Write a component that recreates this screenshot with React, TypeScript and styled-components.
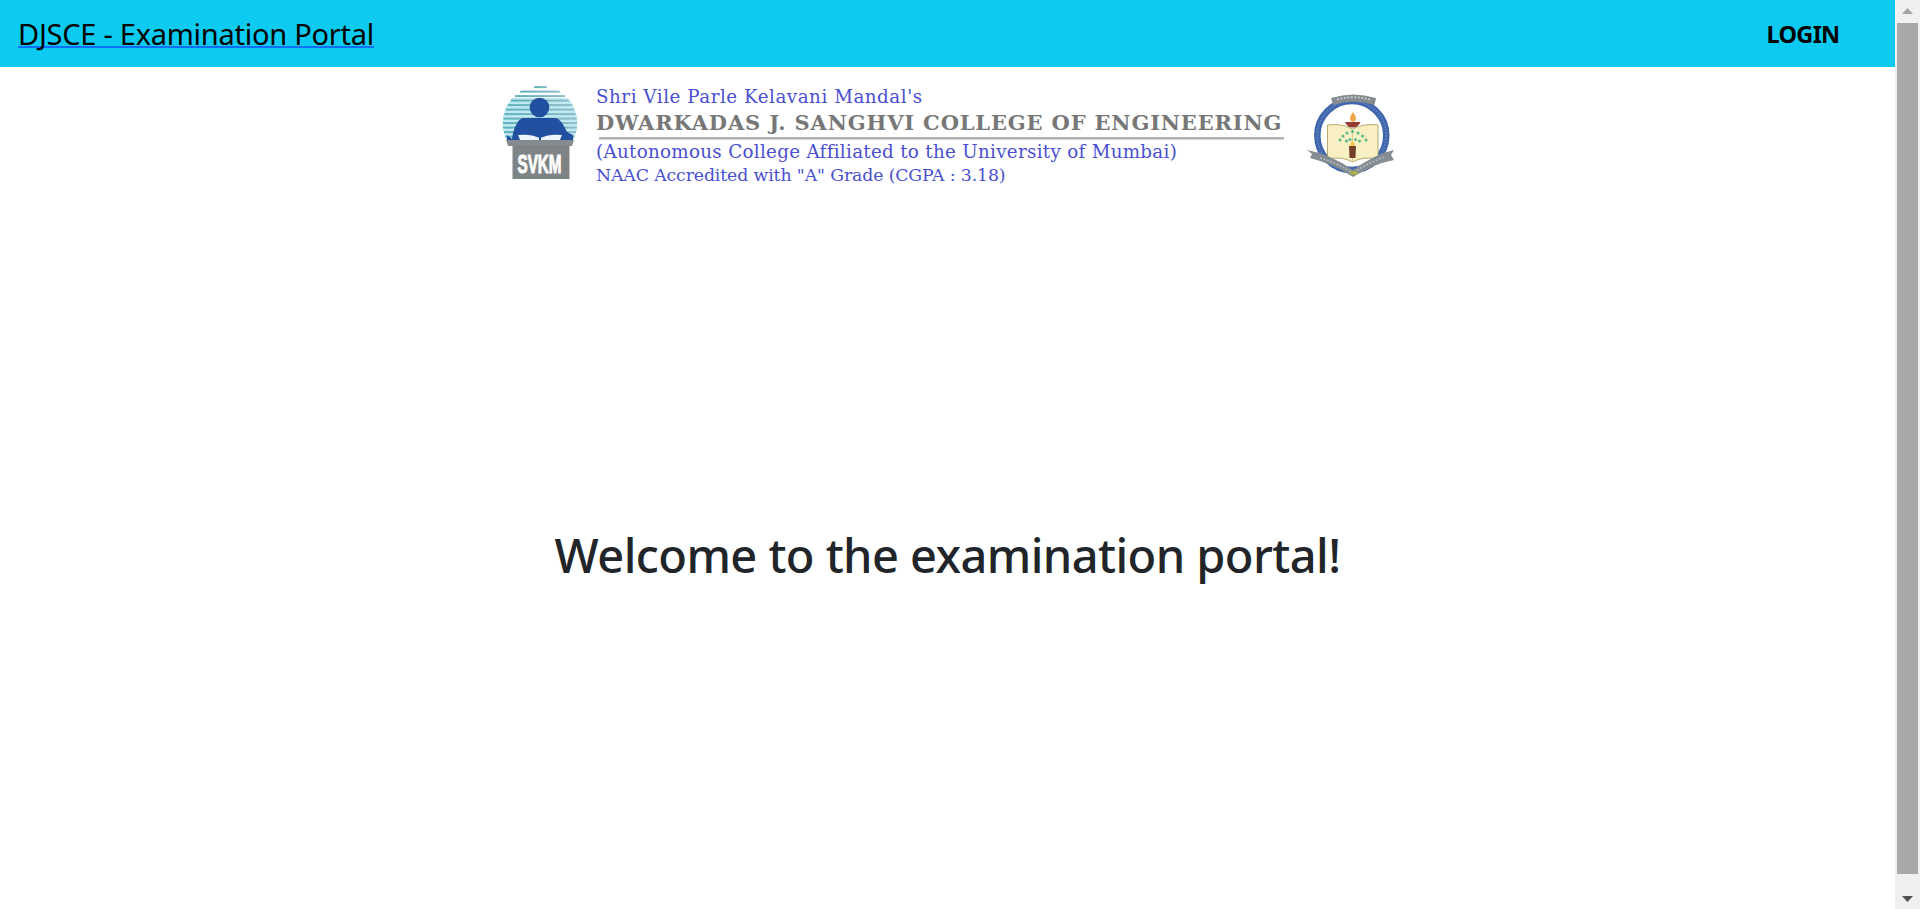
import React from "react";
import styled, { createGlobalStyle } from "styled-components";

const GlobalStyle = createGlobalStyle`
  * { box-sizing: border-box; }
  html, body { margin: 0; height: 100%; overflow: hidden; background: #fff; }
  body { font-family: "Noto Sans", "Open Sans", sans-serif; color: #212529; }
`;

const Shell = styled.div`
  display: flex;
  height: 100vh;
`;

const Page = styled.div`
  flex: 1;
  min-width: 0;
  display: flex;
  flex-direction: column;
`;

const Navbar = styled.header`
  height: 67px;
  flex: none;
  display: flex;
  align-items: center;
  justify-content: space-between;
  padding: 0 55.5px 0 18px;
  background: #0dcaf0;
`;

const Brand = styled.a`
  font-size: 29px;
  line-height: 40px;
  font-weight: 400;
  letter-spacing: -0.26px;
  white-space: nowrap;
  color: #000;
  text-decoration: underline;
  text-decoration-color: #0d6efd;
  text-decoration-thickness: 2px;
  text-underline-offset: 1px;
  text-decoration-skip-ink: none;
`;

const LoginLink = styled.a`
  font-size: 23.5px;
  line-height: 32px;
  font-weight: 700;
  letter-spacing: -0.7px;
  color: #000;
  text-decoration: none;
`;

const Banner = styled.section`
  width: 901px;
  height: 123px;
  margin: 0 auto;
  padding-top: 13px;
  flex: none;
  display: flex;
`;

const Crest = styled.svg`
  flex: none;
  display: block;
  overflow: visible;
`;

const BannerText = styled.div`
  width: 703px;
  padding: 5px 0 0 9px;
  flex: none;
  font-family: "DejaVu Serif", serif;
  color: #4a4fd0;
`;

const BannerLine = styled.div<{ $size: number; $spacing: number; $height: number }>`
  font-size: ${(p) => p.$size}px;
  letter-spacing: ${(p) => p.$spacing}px;
  height: ${(p) => p.$height}px;
  line-height: ${(p) => p.$height}px;
  white-space: nowrap;
`;

const CollegeName = styled(BannerLine)`
  font-weight: 700;
  color: #777;
`;

const Rule = styled.div`
  width: 685px;
  height: 3px;
  margin-left: 3px;
  background: #b0b0b0;
  border-bottom: 1px solid #d4d4d4;
`;

const Welcome = styled.main`
  flex: 1;
  padding-top: 333px;
  text-align: center;
`;

const Heading = styled.h1`
  margin: 0;
  font-size: 47px;
  line-height: 64px;
  font-weight: 500;
  letter-spacing: -0.57px;
`;

const Scrollbar = styled.aside`
  width: 25px;
  flex: none;
  display: flex;
  flex-direction: column;
  align-items: center;
  background: #f0f0f0;
`;

const ScrollButton = styled.div<{ $height: number; $top: number }>`
  height: ${(p) => p.$height}px;
  padding-top: ${(p) => p.$top}px;
  flex: none;
`;

const Thumb = styled.div`
  width: 21px;
  flex: 1;
  background: #a8a8a8;
`;

const stripes = [
  [87, 534, 547], [91.5, 520, 560], [96, 515, 565], [100.5, 511, 569],
  [105, 508, 572], [109.5, 506, 574], [114, 504.5, 575.5], [118.5, 503.5, 576.5],
  [123, 503, 577], [127.5, 503, 577], [132, 504, 576], [136.5, 505, 575],
];

function MandalCrest() {
  return (
    <Crest width="90" height="110" viewBox="497 80 90 110">
      <defs>
        <clipPath id="globe"><circle cx="540" cy="123" r="37.5" /></clipPath>
        <linearGradient id="sky" x1="0" x2="1">
          <stop offset="0" stopColor="#5fb0bd" />
          <stop offset="1" stopColor="#8dbcc7" />
        </linearGradient>
      </defs>
      <g clipPath="url(#globe)">
        <rect x="502" y="98" width="76" height="43" fill="#c0eaf2" />
        {stripes.map(([y, a, b]) => (
          <rect key={y} x={a} y={y - 0.9} width={b - a} height="2" fill="url(#sky)" />
        ))}
      </g>
      <circle cx="539.5" cy="107.5" r="9.8" fill="#20509f" />
      <path d="M512 139 L513 133 Q517 119 523 118 L556 118 Q561 119 567 132 L573 135 L573 140 L507 140 L507 135 Z" fill="#20509f" />
      <path d="M518 135 Q530 133.5 540 138 Q550 133.5 562 135 L560 140 L520 140 Z" fill="#edf4fb" />
      <path d="M540 136 V140" stroke="#20509f" strokeWidth="2" />
      <path d="M506 140 H574 L572 146 H508 Z" fill="#858b8f" />
      <rect x="512.5" y="145.5" width="57" height="33.500" fill="#7f8587" />
      <text x="517.5" y="172.5" textLength="44" lengthAdjust="spacingAndGlyphs" fontFamily="Liberation Sans" fontWeight="700" fontSize="26" fill="#fff" stroke="#fff" strokeWidth="1">SVKM</text>
    </Crest>
  );
}

const leaves = [
  [1340, 140], [1343, 136], [1347, 133], [1352.5, 131.5], [1358, 133], [1362.5, 136], [1366, 140],
  [1346.5, 141], [1350, 139.5], [1355.5, 139.5], [1359.5, 141],
];

function CollegeCrest() {
  return (
    <Crest width="108" height="110" viewBox="1290 80 108 110">
      <circle cx="1351.8" cy="135.5" r="34.5" fill="#fff" stroke="#3f66ac" strokeWidth="6.5" />
      <circle cx="1351.8" cy="135.5" r="34.5" fill="none" stroke="#6484bd" strokeWidth="1.8" strokeDasharray="1.5 1.5" />
      <path d="M1331 98 Q1353 91 1376 98 L1374.500 105 Q1353 98 1333 105 Z" fill="#858b8f" />
      <path d="M1337 99.500 Q1353 95 1370 99.500" fill="none" stroke="#c2c5c8" strokeWidth="2" strokeDasharray="2 1.5" />
      <path d="M1327.500 125 Q1341 123 1352.500 129 Q1364 123 1378 125 V159 Q1363 156 1352.500 162 Q1342 156 1327.500 159 Z" fill="#f8f0c2" stroke="#b7aa72" strokeWidth="1" />
      <path d="M1352.500 129 V161" stroke="#d8cc93" />
      <path d="M1345 122 H1360.500 Q1358 127.500 1352.800 127.500 Q1347 127.500 1345 122 Z" fill="#953c31" />
      <path d="M1353 112 Q1359 120 1353 122 Q1347 120 1353 112" fill="#f0a74c" />
      {leaves.map(([x, y]) => <circle key={`${x}-${y}`} cx={x} cy={y} r="1.5" fill="#5ab88b" />)}
      <path d="M1352.500 141 Q1357 145 1352.500 147 Q1348 145 1352.500 141" fill="#eec343" />
      <path d="M1349 146 H1356 L1355.500 158 H1349.500 Z" fill="#76402c" />
      <path d="M1307 150 Q1330 154 1353 170 Q1375 154 1394 150 L1391 155 L1394 160 Q1373 164 1353 177 Q1334 164 1310 158 L1312 154 Z" fill="#858c92" />
      <path d="M1320 158 Q1338 163 1353 173.500 Q1367 163 1385 157" fill="none" stroke="#b5babf" strokeWidth="1.5" strokeDasharray="2 1.5" />
      <ellipse cx="1354" cy="173" rx="4" ry="1.8" fill="#a9b33f" />
    </Crest>
  );
}

export default function App() {
  return (
    <Shell>
      <GlobalStyle />
      <Page>
        <Navbar>
          <Brand>DJSCE - Examination Portal</Brand>
          <LoginLink>LOGIN</LoginLink>
        </Navbar>
        <Banner>
          <MandalCrest />
          <BannerText>
            <BannerLine $size={18.3} $spacing={0.53} $height={24}>Shri Vile Parle Kelavani Mandal's</BannerLine>
            <CollegeName $size={21} $spacing={0.83} $height={28}>DWARKADAS J. SANGHVI COLLEGE OF ENGINEERING</CollegeName>
            <Rule />
            <BannerLine $size={18.3} $spacing={0.3} $height={23}>(Autonomous College Affiliated to the University of Mumbai)</BannerLine>
            <BannerLine $size={17.3} $spacing={-0.12} $height={24}>NAAC Accredited with "A" Grade (CGPA : 3.18)</BannerLine>
          </BannerText>
          <CollegeCrest />
        </Banner>
        <Welcome>
          <Heading>Welcome to the examination portal!</Heading>
        </Welcome>
      </Page>
      <Scrollbar>
        <ScrollButton $height={23} $top={8}>
          <svg width="11" height="6" viewBox="0 0 11 6" display="block"><path d="M5.500 0 L11 6 H0 Z" fill="#a3a3a3" /></svg>
        </ScrollButton>
        <Thumb />
        <ScrollButton $height={35} $top={22}>
          <svg width="11" height="6" viewBox="0 0 11 6" display="block"><path d="M0 0 H11 L5.500 6 Z" fill="#505050" /></svg>
        </ScrollButton>
      </Scrollbar>
    </Shell>
  );
}
